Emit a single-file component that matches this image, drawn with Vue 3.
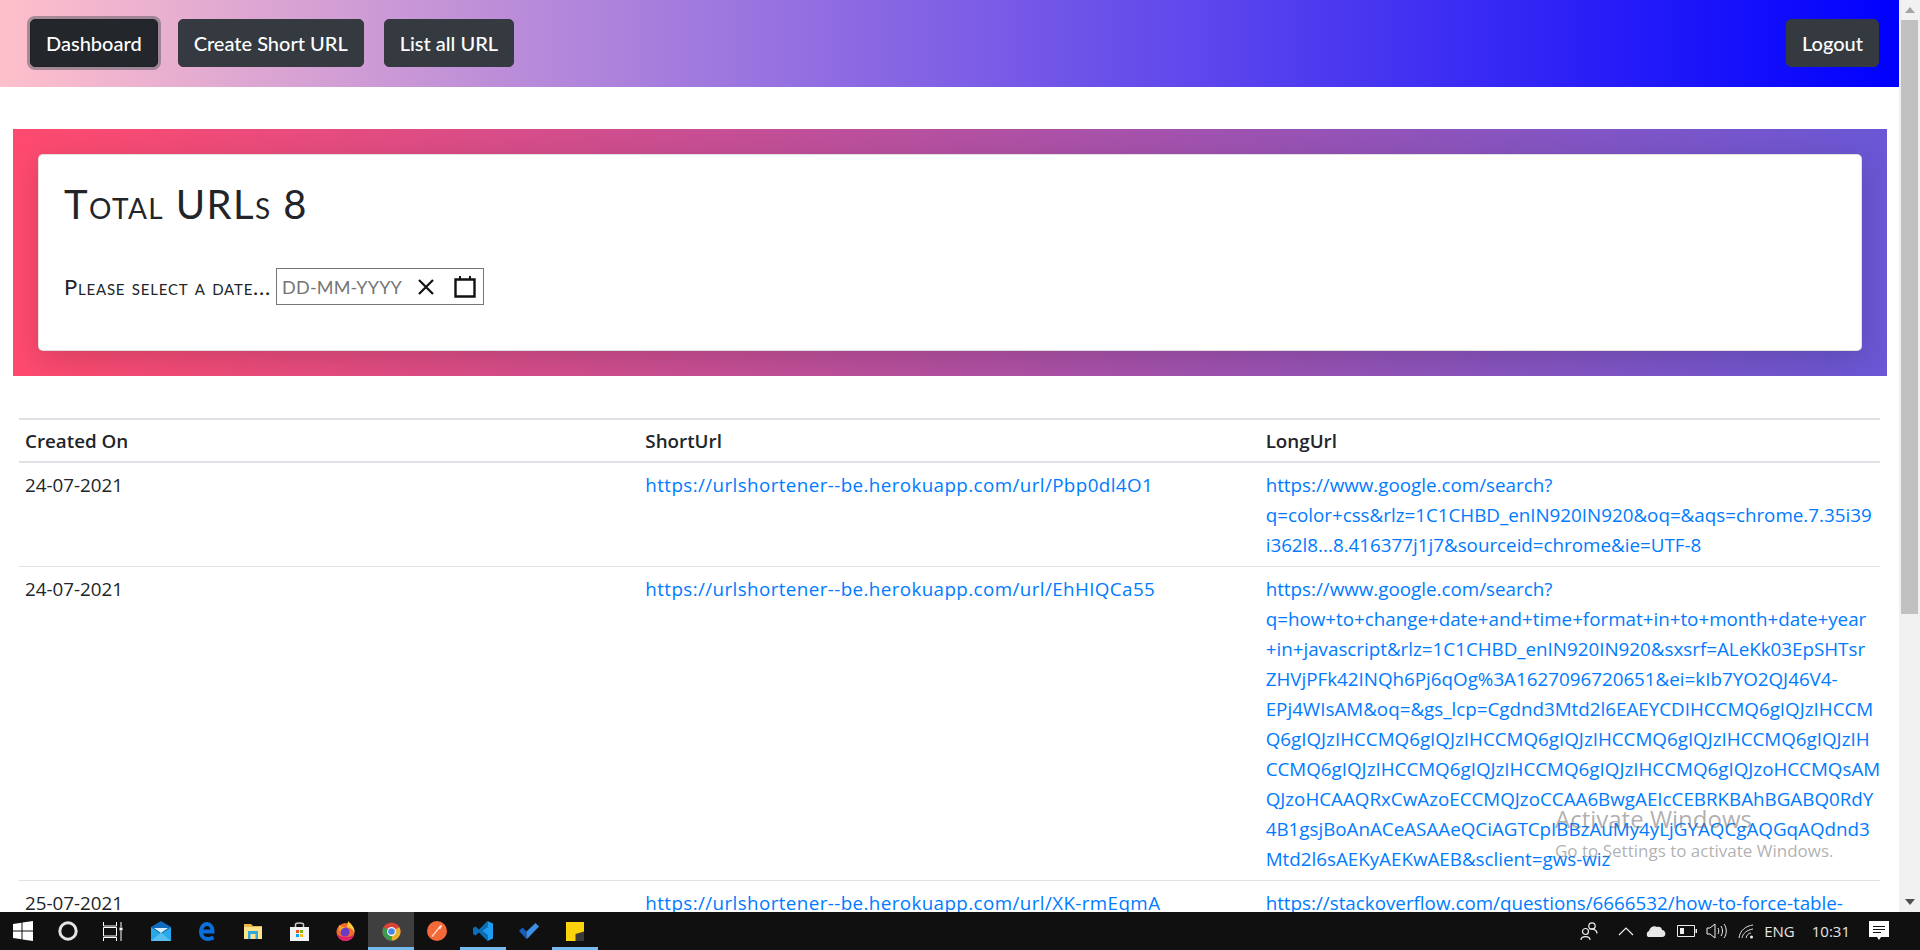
<template>
  <div class="screen">
    <div class="window">
      <div class="page">
        <nav class="navbar">
          <div class="nav-links">
            <button class="btn btn-active">Dashboard</button>
            <button class="btn">Create Short URL</button>
            <button class="btn">List all URL</button>
          </div>
          <button class="btn">Logout</button>
        </nav>

        <section class="hero">
          <div class="hero-card">
            <h1>Total URLs {{ totalUrls }}</h1>
            <div class="date-row">
              <label for="date">Please select a date...</label>
              <div class="date-input" id="date">
                <span class="date-ph">DD-MM-YYYY</span>
                <svg class="date-x" width="16" height="16" viewBox="0 0 16 16">
                  <path d="M1 1 L15 15 M15 1 L1 15" stroke="#111" stroke-width="2.200" fill="none" />
                </svg>
                <svg class="date-cal" width="22" height="22" viewBox="0 0 22 22">
                  <path d="M1.500 3.500 H20.500 V20.500 H1.500 Z" stroke="#111" stroke-width="2.400" fill="none" />
                  <path d="M6 0 V4 M16 0 V4" stroke="#111" stroke-width="2" />
                </svg>
              </div>
            </div>
          </div>
        </section>

        <table class="url-table">
          <thead>
            <tr>
              <th>Created On</th>
              <th>ShortUrl</th>
              <th>LongUrl</th>
            </tr>
          </thead>
          <tbody>
            <tr v-for="row in rows" :key="row.short">
              <td>{{ row.date }}</td>
              <td><a href="#" class="short">{{ row.short }}</a></td>
              <td>
                <a href="#" class="long">
                  <span v-for="line in row.long" :key="line">{{ line }}</span>
                </a>
              </td>
            </tr>
          </tbody>
        </table>
      </div>

      <div class="scrollbar">
        <div class="arrow arrow-up"></div>
        <div class="thumb"></div>
        <div class="track"></div>
        <div class="arrow arrow-down"></div>
      </div>

      <div class="watermark">
        <div class="wm-title">Activate Windows</div>
        <div class="wm-sub">Go to Settings to activate Windows.</div>
      </div>
    </div>

    <footer class="taskbar">
      <div class="task-left">
        <div class="task-icon task-sys">
          <svg width="20" height="20" viewBox="0 0 20 20"><path fill="#fff" d="M0 3 L8.500 1.800 V9.500 H0 Z M9.500 1.600 L20 0 V9.500 H9.500 Z M0 10.500 H8.500 V18.200 L0 17 Z M9.500 10.500 H20 V20 L9.500 18.400 Z" /></svg>
        </div>
        <div class="task-icon task-sys">
          <svg width="20" height="20" viewBox="0 0 20 20"><circle cx="10" cy="10" r="8.200" fill="none" stroke="#e4e4e4" stroke-width="3" /></svg>
        </div>
        <div class="task-icon task-sys task-view">
          <svg width="20" height="19" viewBox="0 0 20 19"><path fill="none" stroke="#fff" d="M.500 0 V4 H13.500 V0 M.500 5.500 H13.500 V14 H.500 Z M.500 19 V15.500 H13.500 V19 M18 0 V5 M18 9 V19" /><rect x="16.500" y="5.500" width="3" height="3" fill="#fff" /></svg>
        </div>
        <div class="task-icon">
          <svg width="20" height="20" viewBox="0 0 20 20"><path fill="#0f6cbd" d="M0 6 L10 0 L20 6 L10 13 Z" /><path fill="#29a8ea" d="M0 6 L10 13 L20 6 V20 H0 Z" /><path fill="#d8effc" d="M3 7 H17 L10 12 Z" /><path fill="#57bff2" d="M0 20 L10 11.500 L20 20 Z" /></svg>
        </div>
        <div class="task-icon">
          <svg width="16" height="19" viewBox="0 0 16 19"><path fill="none" stroke="#0a6fd8" stroke-width="4" d="M2.500 9.500 H13.500 C13.500 4.500 11 2 8 2 C4.500 2 2 5.500 2 10 C2 14.500 5.500 17 9 17 C11 17 12.500 16.500 14.500 15.500" /></svg>
        </div>
        <div class="task-icon">
          <svg width="18" height="15" viewBox="0 0 18 15"><path fill="#e9b64e" d="M0 0 H7 L9 2 H18 V5 H0 Z" /><path fill="#ffe28c" d="M0 3 H18 V15 H0 Z" /><path fill="#2fa7df" d="M4 15 V7 H14 V15 H11.500 V10 H6.500 V15 Z" /></svg>
        </div>
        <div class="task-icon">
          <svg width="19" height="19" viewBox="0 0 19 19"><path fill="none" stroke="#ccc" stroke-width="1.500" d="M5.500 6 V2.500 C5.500 .500 13.500 .500 13.500 2.500 V6" /><path fill="#f4f4f4" d="M0 5 H19 V19 H0 Z" /><path fill="#f25022" d="M6 8 H9 V11 H6 Z" /><path fill="#7fba00" d="M10 8 H13 V11 H10 Z" /><path fill="#00a4ef" d="M6 12 H9 V15 H6 Z" /><path fill="#ffb900" d="M10 12 H13 V15 H10 Z" /></svg>
        </div>
        <div class="task-icon">
          <svg width="19" height="20" viewBox="0 0 19 20"><circle cx="9.500" cy="11" r="9" fill="#f36b2c" /><path fill="#e0206f" d="M1 13 C2 17 5 20 9.500 20 C14 20 17.500 17 18.300 13 C15 17 5 17 1 13 Z" /><path fill="#ffcb3d" d="M12 0 C15 3 19 6 18.500 12 C17 8 14 6.500 11 6.500 C11 4 12 2 12 0 Z" /><circle cx="9" cy="11" r="4.500" fill="#6a3bc4" /><path fill="#f7a531" d="M3 4 C5 6 8 6 11 6.500 C7 6.500 5 8 4.500 11 C2.500 9 2.500 6 3 4 Z" /></svg>
        </div>
        <div class="task-icon task-chrome">
          <svg width="19" height="19" viewBox="0 0 24 24"><circle cx="12" cy="12" r="11.500" fill="#d9433a" /><path fill="#e8b52a" d="M12 12 L22 6.500 A11.500 11.500 0 0 1 12 23.500 Z" /><path fill="#3c9a4f" d="M12 12 L12 23.500 A11.500 11.500 0 0 1 2 6.500 Z" /><circle cx="12" cy="12" r="5.600" fill="#fff" /><circle cx="12" cy="12" r="4.200" fill="#4a86e8" /></svg>
        </div>
        <div class="task-icon">
          <svg width="20" height="20" viewBox="0 0 20 20"><circle cx="10" cy="10" r="10" fill="#f4693a" /><path fill="none" stroke="#ffd9c4" stroke-width="1.300" d="M5 15.500 L14 4.500" /><path fill="#ffe6d8" d="M11.500 6.500 L14.500 4 L15 5 L13 8.500 Z" /></svg>
        </div>
        <div class="task-icon task-open">
          <svg width="20" height="20" viewBox="0 0 20 20"><path fill="#0a6fb8" d="M14.500 0 V6 L9 10 L14.500 14 V20 L6 11.500 L2.500 14.500 L0 13 V7 L2.500 5.500 L6 8.500 Z" /><path fill="#1f9cf0" d="M14.500 0 L20 2.500 V17.500 L14.500 20 V14 L9 10 L14.500 6 Z" /></svg>
        </div>
        <div class="task-icon">
          <svg width="20" height="16" viewBox="0 0 20 16"><path fill="#185abd" d="M0 8 L3.500 4.500 L7.500 8.500 V16 Z" /><path fill="#3a8ee6" d="M7.500 16 V8.500 L16.500 0 L20 3.500 L9 15 Z" /></svg>
        </div>
        <div class="task-icon task-open">
          <svg width="18" height="19" viewBox="0 0 18 19"><path fill="#fbd30c" d="M0 0 H18 V19 H0 Z" /><path fill="#3a3a3a" d="M18 9.500 L9.500 12 V19 H18 Z" /></svg>
        </div>
      </div>

      <div class="task-tray">
        <svg class="tray-people" width="18" height="20" viewBox="0 0 18 20"><g fill="none" stroke="#eee" stroke-width="1.200"><circle cx="12" cy="5" r="3.200" /><circle cx="5.500" cy="10.500" r="3" /><path d="M1 19 C1 14.500 10 14.500 10 19 M9.500 8 C12 7.500 17 8.500 17 12.500" /></g></svg>
        <svg class="tray-caret" width="16" height="10" viewBox="0 0 16 10"><path d="M1 9 L8 2 L15 9" fill="none" stroke="#eee" stroke-width="1.200" /></svg>
        <svg class="tray-cloud" width="20" height="14" viewBox="0 0 20 14"><path fill="#e8e8e8" d="M3 13 C0 13 0 8 3 7 C4 3 8 1 11 3 C14 2 16 4 16 6 C20 6 21 13 16 13 Z" /></svg>
        <svg class="tray-battery" width="20" height="12" viewBox="0 0 20 12"><path d="M.500 .500 H17.500 V11.500 H.500 Z" fill="none" stroke="#eee" /><path d="M3 3 H7 V9 H3 Z M18.500 4 H20 V8 H18.500 Z" fill="#eee" /></svg>
        <svg class="tray-volume" width="22" height="16" viewBox="0 0 22 16"><path d="M1 5 H4 L9 1 V15 L4 11 H1 Z M12 5 C13 7 13 9 12 11 M15 3 C17 6 17 10 15 13 M18 1 C21 5 21 11 18 15" fill="none" stroke="#eee" /></svg>
        <svg class="tray-wifi" width="16" height="16" viewBox="0 0 16 16"><path d="M1 15 C2 7 8 3 15 2 M4 15 C5 10 9 7 15 6 M8 15 C8.500 12 11 10 13 10" fill="none" stroke="#ddd" /><circle cx="13.500" cy="14" r="1.500" fill="#eee" /></svg>
        <span class="tray-lang">ENG</span>
        <span class="tray-clock">10:31</span>
        <svg class="tray-notif" width="20" height="20" viewBox="0 0 20 20"><path fill="#fff" d="M0 0 H20 V16 H12 L10 19 L8 16 H0 Z" /><path d="M4 5.500 H16 M4 8.500 H16 M4 11.500 H12" stroke="#111" /></svg>
      </div>
    </footer>
  </div>
</template>

<script setup>
const totalUrls = 8
const shortBase = 'https://urlshortener--be.herokuapp.com/url/'

const rows = [
  {
    date: '24-07-2021',
    short: shortBase + 'Pbp0dl4O1',
    long: [
      'https://www.google.com/search?',
      'q=color+css&rlz=1C1CHBD_enIN920IN920&oq=&aqs=chrome.7.35i39',
      'i362l8...8.416377j1j7&sourceid=chrome&ie=UTF-8'
    ]
  },
  {
    date: '24-07-2021',
    short: shortBase + 'EhHIQCa55',
    long: [
      'https://www.google.com/search?',
      'q=how+to+change+date+and+time+format+in+to+month+date+year',
      '+in+javascript&rlz=1C1CHBD_enIN920IN920&sxsrf=ALeKk03EpSHTsr',
      'ZHVjPFk42INQh6Pj6qOg%3A1627096720651&ei=kIb7YO2QJ46V4-',
      'EPj4WIsAM&oq=&gs_lcp=Cgdnd3Mtd2l6EAEYCDIHCCMQ6gIQJzIHCCM',
      'Q6gIQJzIHCCMQ6gIQJzIHCCMQ6gIQJzIHCCMQ6gIQJzIHCCMQ6gIQJzIH',
      'CCMQ6gIQJzIHCCMQ6gIQJzIHCCMQ6gIQJzIHCCMQ6gIQJzoHCCMQsAM',
      'QJzoHCAAQRxCwAzoECCMQJzoCCAA6BwgAEIcCEBRKBAhBGABQ0RdY',
      '4B1gsjBoAnACeASAAeQCiAGTCpIBBzAuMy4yLjGYAQCgAQGqAQdnd3',
      'Mtd2l6sAEKyAEKwAEB&sclient=gws-wiz'
    ]
  },
  {
    date: '25-07-2021',
    short: shortBase + 'XK-rmEqmA',
    long: ['https://stackoverflow.com/questions/6666532/how-to-force-table-']
  }
]
</script>

<style>
html,
body {
  margin: 0;
  overflow: hidden;
}
</style>

<style scoped>
.screen {
  height: 950px;
  display: flex;
  flex-direction: column;
  overflow: hidden;
  font-family: Lato, "Open Sans", sans-serif;
  font-size: 20px;
  line-height: 30px;
  color: #212529;
}
.window {
  flex: 1;
  min-height: 0;
  display: flex;
  position: relative;
}
.page {
  flex: 1;
  min-width: 0;
  overflow: hidden;
}
.navbar {
  height: 87px;
  box-sizing: border-box;
  padding: 19px 20px 0 30px;
  display: flex;
  justify-content: space-between;
  align-items: flex-start;
  background: linear-gradient(to right, #ffc0cb, #0000ff);
}
.nav-links {
  display: flex;
  gap: 20px;
}
.btn {
  height: 48px;
  padding: 0 15px;
  border: 1px solid #343a40;
  border-radius: 5px;
  background: #343a40;
  color: #fff;
  font: inherit;
  font-weight: 500;
}
.btn-active {
  background: #23272b;
  border-color: #1d2124;
  box-shadow: 0 0 0 3px rgba(82, 88, 93, 0.5);
}
.hero {
  margin: 42px 12px 0 13px;
  padding: 25px;
  overflow: hidden;
  background: linear-gradient(to right, #ff4a6e, #6a57d5);
}
.hero-card {
  height: 197px;
  box-sizing: border-box;
  padding: 19px 25px 0;
  background: #fff;
  border: 1px solid rgba(0, 0, 0, 0.125);
  border-radius: 5px;
  box-shadow: 0 8px 30px rgba(0, 0, 0, 0.15);
}
h1 {
  margin: 0;
  font-size: 40px;
  line-height: 60px;
  font-weight: 400;
  font-variant: small-caps;
  letter-spacing: 1.4px;
}
.date-row {
  margin-top: 34px;
  display: flex;
  align-items: center;
  gap: 5px;
  font-size: 22px;
  letter-spacing: 0.8px;
  font-variant: small-caps;
}
.date-input {
  width: 208px;
  height: 37px;
  box-sizing: border-box;
  border: 1px solid #767676;
  display: flex;
  align-items: center;
  padding-left: 5px;
}
.date-ph {
  color: #757575;
  font-variant: normal;
  font-size: 18px;
  letter-spacing: 0.2px;
  width: 136px;
  flex: none;
}
.date-cal {
  margin-left: 20px;
}
.url-table {
  margin: 42px 19px 0 19px;
  width: 1861px;
  table-layout: fixed;
  border-collapse: collapse;
  font-family: "Open Sans", sans-serif;
  font-size: 18.8px;
}
th,
td {
  padding: 7px 6px 5.8px;
  text-align: left;
  vertical-align: top;
  border-top: 1px solid #dee2e6;
}
th {
  padding: 6px 6px 5px;
  font-weight: 600;
  border-top-width: 2px;
  border-bottom: 2px solid #dee2e6;
}
a {
  color: #007bff;
  text-decoration: none;
}
.short {
  letter-spacing: 0.4px;
}
.long span {
  display: block;
  white-space: nowrap;
}
.scrollbar {
  width: 21px;
  flex: none;
  display: flex;
  flex-direction: column;
  background: #f1f1f1;
}
.thumb {
  margin: 0 2px;
  height: 594px;
  background: #c1c1c1;
}
.track {
  flex: 1;
}
.arrow {
  height: 20px;
  display: flex;
  align-items: center;
  justify-content: center;
}
.arrow::before {
  content: "";
  border-left: 5px solid transparent;
  border-right: 5px solid transparent;
}
.arrow-up::before {
  border-bottom: 6px solid #a3a3a3;
}
.arrow-down::before {
  border-top: 6px solid #505050;
}
.watermark {
  position: absolute;
  left: 1555px;
  top: 802px;
  color: rgba(110, 110, 110, 0.55);
  font-family: "Open Sans", sans-serif;
}
.wm-title {
  font-size: 24px;
  line-height: 34px;
}
.wm-sub {
  font-size: 17px;
  line-height: 24px;
  margin-top: 3px;
}
.taskbar {
  height: 38px;
  flex: none;
  display: flex;
  justify-content: space-between;
  align-items: center;
  background: #101010;
}
.task-left {
  display: flex;
  height: 100%;
}
.task-icon {
  width: 46px;
  height: 100%;
  display: flex;
  align-items: center;
  justify-content: center;
}
.task-sys {
  width: 45px;
}
.task-view {
  margin-right: 3px;
}
.task-chrome {
  background: #3f3f3f;
  box-shadow: inset 0 -3px 0 #76b9ed;
}
.task-open {
  box-shadow: inset 0 -3px 0 #76b9ed;
}
.task-tray {
  display: flex;
  align-items: center;
  color: #e6e6e6;
  font-family: "Open Sans", sans-serif;
  font-size: 15px;
  padding-right: 31px;
}
.tray-people {
  margin-right: 20px;
}
.tray-caret {
  margin-right: 12px;
}
.tray-cloud {
  margin-right: 11px;
}
.tray-battery {
  margin-right: 9px;
}
.tray-volume {
  margin-right: 10px;
}
.tray-wifi {
  margin-right: 10px;
}
.tray-lang {
  margin-right: 17px;
}
.tray-clock {
  margin-right: 19px;
}
</style>
